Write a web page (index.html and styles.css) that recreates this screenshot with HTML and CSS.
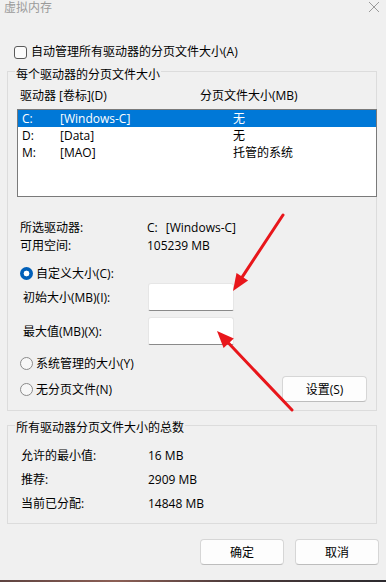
FILE: index.html
```html
<!DOCTYPE html>
<html lang="zh-CN">
<head>
<meta charset="utf-8">
<title>虚拟内存</title>
<link rel="stylesheet" href="styles.css">
</head>
<body>
<div class="window">
  <header class="titlebar">
    <span class="title">虚拟内存</span>
    <svg class="close" width="12" height="12" viewBox="0 0 12 12"><path d="M1 1L11 11M11 1L1 11" stroke="#9a9a9a" stroke-width="1" fill="none"/></svg>
  </header>

  <div class="check-row"><span class="checkbox"></span><span>自动管理所有驱动器的分页文件大小(A)</span></div>

  <fieldset class="group group-drives">
    <legend>每个驱动器的分页文件大小</legend>
    <div class="list-head"><span>驱动器 [卷标](D)</span><span>分页文件大小(MB)</span></div>
    <div class="listbox">
      <div class="list-row selected"><span>C:</span><span>[Windows-C]</span><span>无</span></div>
      <div class="list-row"><span>D:</span><span>[Data]</span><span>无</span></div>
      <div class="list-row"><span>M:</span><span>[MAO]</span><span>托管的系统</span></div>
    </div>
    <div class="info-grid">
      <span>所选驱动器:</span><span>C:<span class="gap"></span>[Windows-C]</span>
      <span>可用空间:</span><span>105239 MB</span>
    </div>
    <div class="radio-row"><span class="radio checked"></span><span>自定义大小(C):</span></div>
    <div class="field-row"><span class="field-label">初始大小(MB)(I):</span><span class="input"></span></div>
    <div class="field-row second"><span class="field-label">最大值(MB)(X):</span><span class="input"></span></div>
    <div class="radio-row sys"><span class="radio"></span><span>系统管理的大小(Y)</span></div>
    <div class="last-row">
      <span class="radio-label"><span class="radio"></span><span>无分页文件(N)</span></span>
      <button class="btn btn-set">设置(S)</button>
    </div>
  </fieldset>

  <fieldset class="group group-total">
    <legend>所有驱动器分页文件大小的总数</legend>
    <div class="total-grid">
      <span>允许的最小值:</span><span>16 MB</span>
      <span>推荐:</span><span>2909 MB</span>
      <span>当前已分配:</span><span>14848 MB</span>
    </div>
  </fieldset>

  <div class="actions">
    <button class="btn">确定</button>
    <button class="btn">取消</button>
  </div>

  <div class="desktop-strip"></div>

  <svg class="arrows" width="386" height="582" viewBox="0 0 386 582">
    <line x1="283" y1="215" x2="242.3" y2="276.8" stroke="#e8161b" stroke-width="3" stroke-linecap="round"/>
    <polygon points="233,291 248.1,280.6 236.5,273" fill="#e8161b"/>
    <line x1="292" y1="410" x2="228.7" y2="343.3" stroke="#e8161b" stroke-width="3" stroke-linecap="round"/>
    <polygon points="217,331 233.8,338.5 223.6,348.1" fill="#e8161b"/>
  </svg>
</div>
</body>
</html>
```

FILE: styles.css
```css
* { box-sizing: border-box; }

html, body {
  margin: 0;
  padding: 0;
}

body {
  width: 386px;
  height: 582px;
  overflow: hidden;
  background: #f0f0f0;
  font-family: "Open Sans", "Noto Sans CJK SC", sans-serif;
  font-size: 12px;
  color: #000;
}

.window {
  position: relative;
  height: 582px;
  display: flex;
  flex-direction: column;
}

.titlebar {
  display: flex;
  justify-content: space-between;
  align-items: flex-start;
  height: 16px;
  line-height: 16px;
  padding: 0 6px 0 4px;
  color: #9b9b9b;
}

.close { margin-top: 1px; }

.check-row {
  margin-top: 28px;
  height: 16px;
  line-height: 16px;
  display: flex;
  align-items: center;
  gap: 4px;
  padding-left: 14px;
}

.checkbox {
  width: 13px;
  height: 13px;
  border: 1px solid #5a5a5a;
  border-radius: 3px;
  background: #fbfbfb;
}

.group {
  margin: 0 9px 0 7px;
  width: 370px;
  min-inline-size: 0;
  border: 1px solid #dcdcdc;
  padding: 0 0 8px 9px;
}

.group legend {
  margin-left: -2px;
  padding: 8px 1px 0;
  line-height: 16px;
}

.group-drives { margin-top: -1px; }

.list-head {
  margin-top: 5px;
  height: 16px;
  line-height: 16px;
  display: grid;
  grid-template-columns: 180px 1fr;
  padding-left: 3px;
}

.listbox {
  margin-top: 5px;
  margin-right: -1px;
  height: 88px;
  border: 1px solid #7a7a7a;
  background: #fff;
}

.list-row {
  height: 17px;
  line-height: 17px;
  display: grid;
  grid-template-columns: 38px 173px 1fr;
  padding-left: 4px;
}

.list-row.selected {
  background: #0078d7;
  color: #fff;
}

.info-grid {
  margin-top: 22px;
  display: grid;
  grid-template-columns: 127px 1fr;
  line-height: 18px;
  padding-left: 3px;
}

.gap {
  display: inline-block;
  width: 8px;
}

.radio-row {
  margin-top: 9px;
  height: 18px;
  display: flex;
  align-items: center;
  gap: 3px;
  padding-left: 3px;
}

.radio {
  width: 13px;
  height: 13px;
  border-radius: 50%;
  border: 1px solid #8a8a8a;
  background: #f7f7f7;
  flex: none;
}

.radio.checked {
  border: none;
  background: radial-gradient(circle, #fff 0 2.6px, #005fb8 3.2px);
}

.field-row {
  margin-top: 1px;
  display: flex;
  align-items: center;
  padding-left: 6px;
}

.field-row.second { margin-top: 6px; }

.field-label { width: 125px; }

.input {
  width: 86px;
  height: 28px;
  background: #fff;
  border: 1px solid #e6e6e6;
  border-bottom-color: #8a8a8a;
  border-radius: 3px 3px 2px 2px;
}

.radio-row.sys { margin-top: 9px; }

.last-row {
  margin-top: 4px;
  height: 26px;
  display: flex;
  justify-content: space-between;
  align-items: center;
  padding: 0 9px 0 3px;
}

.radio-label {
  display: flex;
  align-items: center;
  gap: 3px;
}

.btn {
  width: 84px;
  height: 26px;
  padding: 0;
  font-family: inherit;
  font-size: 12px;
  color: #000;
  background: #fdfdfd;
  border: 1px solid #d6d6d6;
  border-bottom-color: #bdbdbd;
  border-radius: 4px;
}

.btn-set { width: 85px; }

.group-total {
  margin-top: 3px;
  padding-bottom: 7px;
}

.group-total legend { padding-top: 6px; }

.total-grid {
  margin-top: 8px;
  display: grid;
  grid-template-columns: 127px 1fr;
  line-height: 24px;
  padding-left: 4px;
}

.actions {
  margin-top: 15px;
  display: flex;
  justify-content: flex-end;
  gap: 11px;
  padding-right: 7px;
}

.desktop-strip {
  margin-top: auto;
  height: 2px;
  background: linear-gradient(90deg, #5e4340, #8c5f55 30%, #4d3b3b 60%, #2c2a2e);
}

.arrows {
  position: absolute;
  left: 0;
  top: 0;
  pointer-events: none;
}
```
